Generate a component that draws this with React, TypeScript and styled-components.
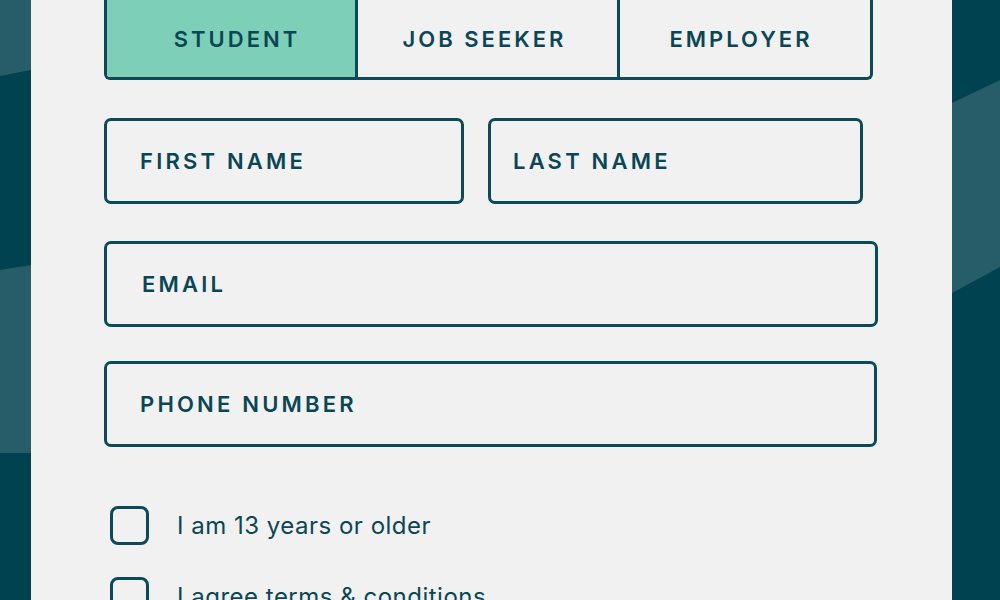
import React from "react";
import styled, { createGlobalStyle } from "styled-components";

const ink = "#0b4655";
const line = "#0d4a58";

const Global = createGlobalStyle`
  html, body { margin: 0; padding: 0; }
  body { background: #014250; font-family: Inter, "Noto Sans", sans-serif; }
`;

const Page = styled.div`
  display: grid;
  grid-template-columns: 31px 921px 48px;
  height: 600px;
  overflow: hidden;
  background: #014250;
`;

const Side = styled.svg`
  display: block;
  width: 100%;
  height: 600px;
`;

const Panel = styled.main`
  background: #f1f1f2;
  padding-left: 73px;
  display: flex;
  flex-direction: column;
  align-items: flex-start;
`;

const TabBar = styled.div`
  display: grid;
  grid-template-columns: 248px 262px 253px;
  height: 80px;
  border: 3px solid ${line};
  border-top: none;
  border-radius: 0 0 6px 6px;
  overflow: hidden;
  box-sizing: border-box;
`;

const Tab = styled.div<{ $active?: boolean; $first?: boolean; $shift?: number }>`
  display: flex;
  align-items: center;
  justify-content: center;
  padding-top: 1px;
  padding-left: ${(p) => Math.max(0, p.$shift ?? 0)}px;
  padding-right: ${(p) => Math.max(0, -(p.$shift ?? 0))}px;
  background: ${(p) => (p.$active ? "#7dcfb7" : "transparent")};
  border-left: ${(p) => (p.$first ? "none" : `3px solid ${line}`)};
  font-size: 22px;
  font-weight: 600;
  letter-spacing: 3px;
  color: ${ink};
`;

const NameRow = styled.div`
  display: grid;
  grid-template-columns: 360px 375px;
  column-gap: 24px;
  margin-top: 38px;
`;

const Field = styled.div<{ $width?: number; $gap?: number; $pad?: number }>`
  box-sizing: border-box;
  width: ${(p) => (p.$width ? `${p.$width}px` : "auto")};
  height: 86px;
  margin-top: ${(p) => p.$gap ?? 0}px;
  border: 3px solid ${line};
  border-radius: 7px;
  display: flex;
  align-items: center;
  padding-left: ${(p) => p.$pad ?? 33}px;
  font-size: 22px;
  font-weight: 600;
  letter-spacing: 3.2px;
  color: ${ink};
`;

const CheckList = styled.div`
  display: flex;
  flex-direction: column;
  gap: 32px;
  margin-top: 59px;
  padding-left: 6px;
`;

const CheckRow = styled.label`
  display: flex;
  align-items: center;
  gap: 28px;
  font-size: 24px;
  font-weight: 400;
  letter-spacing: 0.5px;
  color: ${ink};
  white-space: nowrap;
`;

const Box = styled.span`
  box-sizing: border-box;
  width: 39px;
  height: 39px;
  border: 3px solid ${line};
  border-radius: 8px;
  flex-shrink: 0;
`;

export default function App() {
  return (
    <>
      <Global />
      <Page>
        <Side viewBox="0 0 31 600" preserveAspectRatio="none">
          <polygon points="0,0 31,0 31,70 0,76" fill="#275d69" />
          <polygon points="0,270 31,265 31,453 0,453" fill="#275d69" />
        </Side>
        <Panel>
          <TabBar>
            <Tab $active $first $shift={12}>STUDENT</Tab>
            <Tab $shift={-6}>JOB SEEKER</Tab>
            <Tab $shift={-8}>EMPLOYER</Tab>
          </TabBar>
          <NameRow>
            <Field $pad={33}>FIRST NAME</Field>
            <Field $pad={22}>LAST NAME</Field>
          </NameRow>
          <Field $width={774} $gap={37} $pad={35}>
            EMAIL
          </Field>
          <Field $width={773} $gap={34} $pad={33}>
            PHONE NUMBER
          </Field>
          <CheckList>
            <CheckRow>
              <Box />I am 13 years or older
            </CheckRow>
            <CheckRow>
              <Box />I agree terms &amp; conditions
            </CheckRow>
          </CheckList>
        </Panel>
        <Side viewBox="0 0 48 600" preserveAspectRatio="none">
          <polygon points="0,103 48,80 48,267 0,293" fill="#275d69" />
        </Side>
      </Page>
    </>
  );
}
